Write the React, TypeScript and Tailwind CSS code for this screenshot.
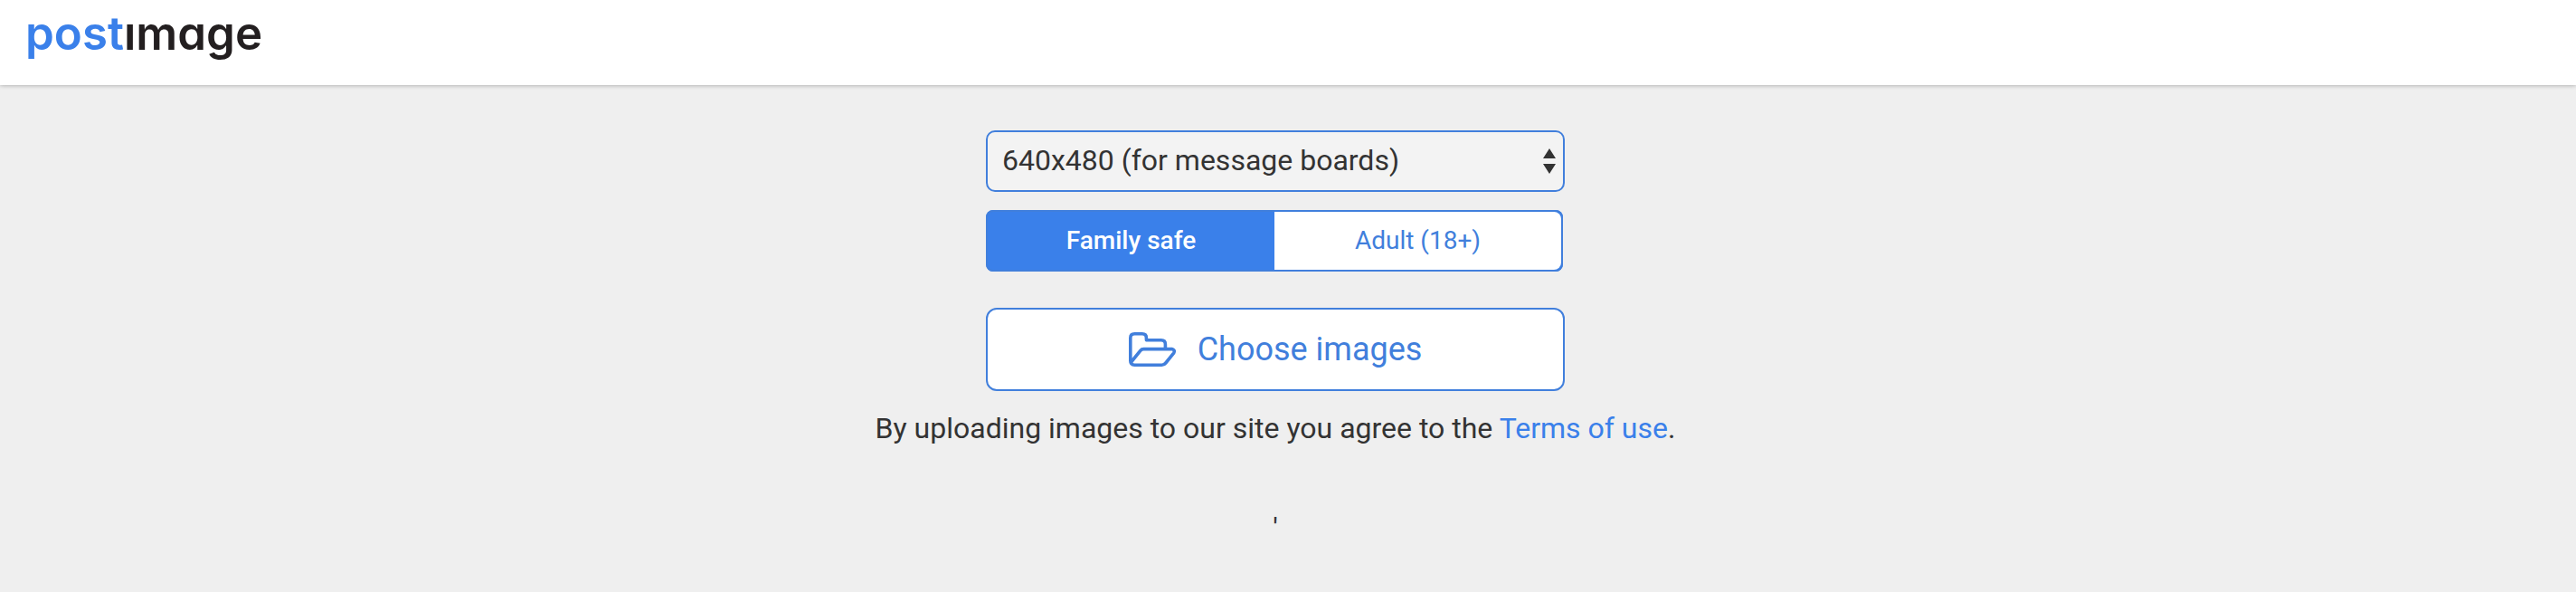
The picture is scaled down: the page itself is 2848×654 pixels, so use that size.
import { useState } from "react";

const SIZES = [
  "Do not resize my image",
  "100x75 (avatar)",
  "150x112 (thumbnail)",
  "320x240 (for websites and email)",
  "640x480 (for message boards)",
  "800x600 (15-inch monitor)",
  "1024x768 (17-inch monitor)",
];

const RATINGS = [
  { value: "safe", label: "Family safe" },
  { value: "adult", label: "Adult (18+)" },
];

function Logo() {
  return (
    <a
      href="#home"
      className="font-['Inter',sans-serif] text-[51px] leading-[58px] font-semibold text-[#231f20] [font-feature-settings:'cv11']"
    >
      <span className="text-[#3a80ea]">post</span>ımage
    </a>
  );
}

function SizeSelect() {
  const [size, setSize] = useState(SIZES[4]);
  return (
    <div className="relative">
      <select
        aria-label="Image size"
        value={size}
        onChange={(e) => setSize(e.target.value)}
        className="block h-[68px] w-full appearance-none rounded-[10px] border-2 border-[#417fdc] bg-[#f3f3f3] pr-12 pb-0.5 pl-4 text-[32px] text-[#333333]"
      >
        {SIZES.map((s) => (
          <option key={s}>{s}</option>
        ))}
      </select>
      <svg
        aria-hidden="true"
        viewBox="0 0 14 28"
        className="pointer-events-none absolute top-5 right-2.5 h-7 w-3.5 fill-[#333333]"
      >
        <path d="M7 0l7 11H0zM7 28l7-11H0z" />
      </svg>
    </div>
  );
}

function RatingSwitch() {
  const [rating, setRating] = useState("safe");
  return (
    <fieldset className="mt-5 mr-0.5 flex h-[68px] overflow-hidden rounded-lg border-2 border-[#417fdc] bg-[#3a80ea]">
      {RATINGS.map((r) => (
        <label
          key={r.value}
          className="relative flex flex-1 cursor-pointer items-center justify-center bg-white text-[28px] text-[#417fdc] has-checked:bg-[#3a80ea] has-checked:font-medium has-checked:text-white"
        >
          <input
            type="radio"
            name="rating"
            value={r.value}
            checked={rating === r.value}
            onChange={() => setRating(r.value)}
            className="sr-only"
          />
          {r.label}
        </label>
      ))}
    </fieldset>
  );
}

function FolderOpenIcon() {
  return (
    <svg
      aria-hidden="true"
      viewBox="0 0 52 38"
      className="h-[38px] w-[52px] fill-none stroke-current stroke-[3.6]"
      strokeLinecap="round"
      strokeLinejoin="round"
    >
      <path d="M40.400 18.600v-5.200q0-4.600-4.600-4.600H20.200q-.8 0-.8-.8V6.400q0-4.600-4.600-4.600H6.400q-4.600 0-4.600 4.600v25.200q0 4.600 4.600 4.600h30q2.600 0 4.400-2.200l9-11.200q1.600-3.400-2.200-4.200H16.400q-2.200 0-3.600 1.800L2.600 33" />
    </svg>
  );
}

export default function App() {
  return (
    <div className="min-h-screen bg-[#efefef] font-['Roboto',sans-serif] text-[#333333]">
      <header className="flex h-[94px] items-start bg-white px-7 pt-2 shadow-[0_0_5px_rgba(0,0,0,0.35)]">
        <Logo />
      </header>
      <main className="flex flex-col items-center pt-[50px] pr-7">
        <form className="w-full max-w-[640px]" onSubmit={(e) => e.preventDefault()}>
          <SizeSelect />
          <RatingSwitch />
          <button
            type="button"
            className="mt-10 flex h-[92px] w-full items-center justify-center gap-6 rounded-xl border-2 border-[#417fdc] bg-white text-[36px] text-[#417fdc]"
          >
            <FolderOpenIcon />
            Choose images
          </button>
        </form>
        <p className="mt-[21px] text-center text-[32px] leading-10">
          By uploading images to our site you agree to the{" "}
          <a href="#terms" className="text-[#3a80ea]">
            Terms of use
          </a>
          .
        </p>
        <p className="mt-[70px] text-[32px] leading-10">'</p>
      </main>
    </div>
  );
}
